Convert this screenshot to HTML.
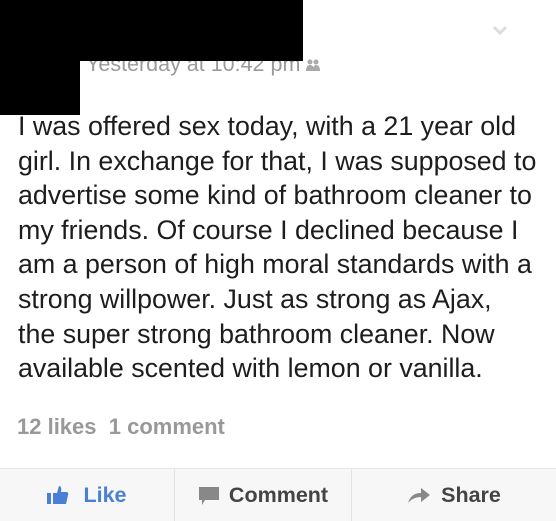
<!DOCTYPE html>
<html><head><style>
body{margin:0;width:556px;height:520px;background:#fff;position:relative;overflow:hidden;font-family:"Liberation Sans",sans-serif}
.b{position:absolute;background:#000;z-index:2}
.t{position:absolute;left:18px;top:109px;font-size:26.8px;line-height:34.6px;color:#1d1d1d;white-space:nowrap}
.ts{position:absolute;left:86px;top:52px;font-size:21.5px;color:#9a9a9a}
.st{position:absolute;left:17px;top:414px;font-size:22px;font-weight:bold;color:#999}
.bar{position:absolute;left:0;top:468px;width:556px;height:52px;background:#f7f7f7;border-top:1px solid #e5e5e5}
.bt{position:absolute;top:0;height:52px;display:flex;align-items:center;justify-content:center;font-size:21.5px;font-weight:bold;color:#444}
</style></head><body>
<div class="b" style="left:0;top:0;width:303px;height:61px"></div>
<div class="b" style="left:0;top:61px;width:80px;height:54px"></div>
<div class="ts">Yesterday at 10:42 pm <svg width="14" height="12"><circle cx="4" cy="3" r="2.5" fill="#aaa"/><path d="M0 12 Q0 6 4 6 Q8 6 8 12Z" fill="#aaa"/><circle cx="10" cy="3" r="2.5" fill="#aaa"/><path d="M7 12 Q7 6 10 6 Q14 6 14 12Z" fill="#aaa"/></svg></div>
<svg style="position:absolute;left:492px;top:24px" width="16" height="12"><path d="M2 3 L8 9 L14 3" stroke="#ddd" stroke-width="3" fill="none"/></svg>
<div class="t">I was offered sex today, with a 21 year old<br>girl. In exchange for that, I was supposed to<br>advertise some kind of bathroom cleaner to<br>my friends. Of course I declined because I<br>am a person of high moral standards with a<br>strong willpower. Just as strong as Ajax,<br>the super strong bathroom cleaner. Now<br>available scented with lemon or vanilla.</div>
<div class="st">12 likes &nbsp;1 comment</div>
<div class="bar">
<div style="position:absolute;left:174px;top:0;width:1px;height:52px;background:#e3e3e3"></div>
<div style="position:absolute;left:351px;top:0;width:1px;height:52px;background:#e3e3e3"></div>
<div class="bt" style="left:0;width:174px;color:#4a7fd6"><svg width="22" height="20" style="margin-right:14px"><rect x="0" y="8" width="4" height="11" fill="#4a7fd6"/><path d="M6 8 L10 8 L12 1 Q15 1 14 7 L20 7 Q22 8 21 10 L19 19 L6 19Z" fill="#4a7fd6"/></svg>Like</div>
<div class="bt" style="left:175px;width:176px"><svg width="22" height="22" style="margin-right:9px"><path d="M1 3 H21 V16 H7 L4 21 V16 H1Z" fill="#888"/></svg>Comment</div>
<div class="bt" style="left:352px;width:204px"><svg width="24" height="18" style="margin-right:10px"><path d="M1 17 Q4 7 14 7 V2 L23 9 L14 16 V11 Q6 11 1 17Z" fill="#888"/></svg>Share</div>
</div>
</body></html>
